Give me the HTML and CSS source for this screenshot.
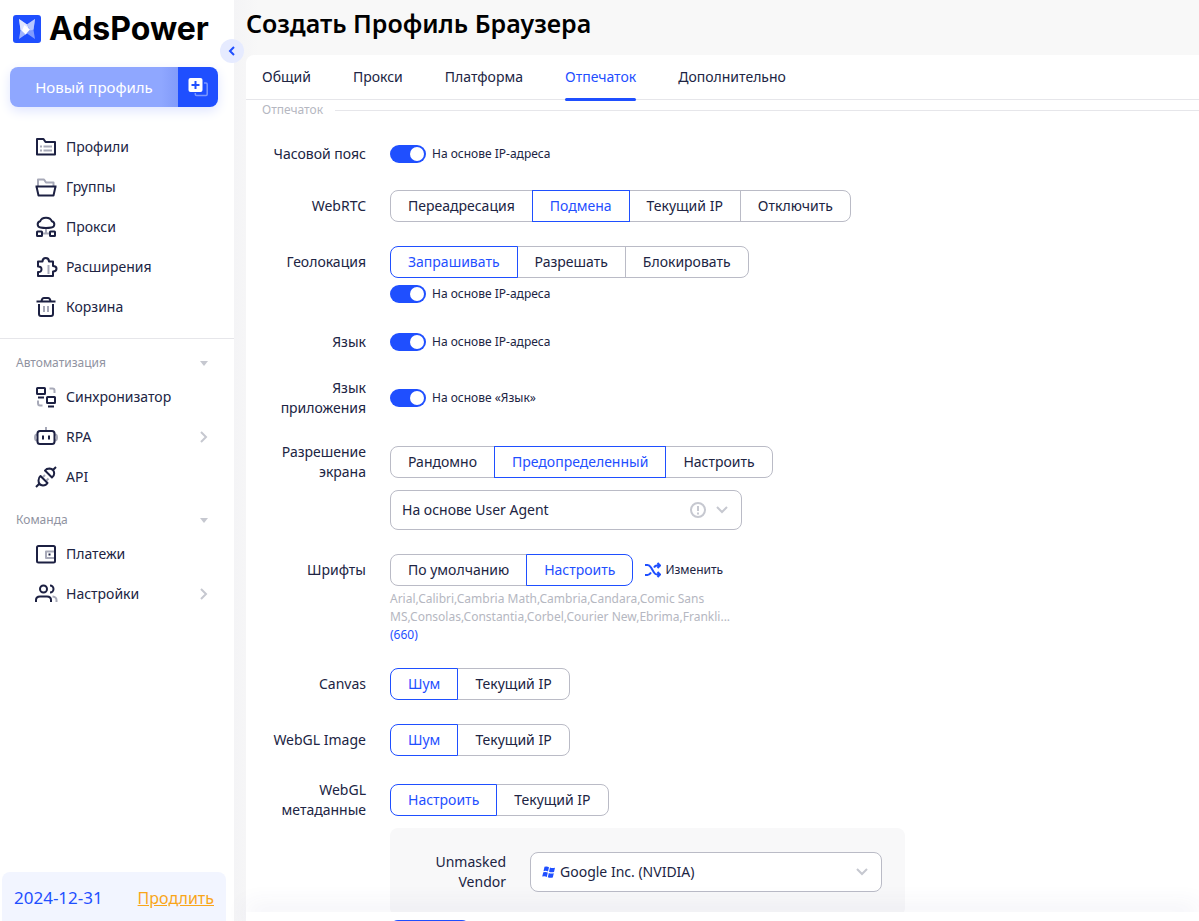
FILE: index.html
```html
<!DOCTYPE html>
<html lang="ru">
<head>
<meta charset="utf-8">
<meta name="viewport" content="width=device-width, initial-scale=1">
<title>AdsPower</title>
<link rel="stylesheet" href="styles.css">
</head>
<body>
<div class="app">
  <aside class="sidebar">
    <button class="collapse" type="button" aria-label="Свернуть меню">
      <svg width="8" height="10" viewBox="0 0 8 10"><path d="M6 1L2 5l4 4"/></svg>
    </button>
    <div class="brand">
      <svg class="brand-mark" width="28" height="28" viewBox="0 0 28 28">
        <rect width="28" height="28" rx="3" fill="#1f4fff"/>
        <path d="M6 4l8 5.500v9L6 24l1.500-9z" fill="#9fb4ff"/>
        <path d="M22 4l-8 5.500v9l8 5.500-1.500-9z" fill="#7f9bff"/>
        <path d="M6 4l8 5.500 1.500 3-5 5-3-3z" fill="#dfe6ff"/>
        <path d="M22 4l-1.500 10.500-3 1-3.500-6z" fill="#b7c7ff"/>
        <path d="M11.500 10l5.500 4.500-4.500 5-3.500-4z" fill="#fff"/>
      </svg>
      <span class="brand-name">AdsPower</span>
    </div>
    <div class="create">
      <button class="create-main" type="button">Новый профиль</button>
      <button class="create-batch" type="button" aria-label="Создать несколько">
        <svg width="20" height="20" viewBox="0 0 20 20">
          <path d="M16 6h2q1.200 0 1.200 1.200v10q0 1.200-1.200 1.200H8.500q-1.200 0-1.200-1.200V16" fill="none" stroke="#7b98ff" stroke-width="1.500"/>
          <rect x="0.500" y="1" width="14" height="14" rx="2" fill="#fff"/>
          <path d="M7.500 4v8M3.500 8h8" stroke="#1f4fff" stroke-width="2"/>
        </svg>
      </button>
    </div>
    <nav class="nav">
      <a class="nav-item" href="#">
        <svg class="icon" viewBox="0 0 24 24"><path d="M3 4h6.500l2 3H21v12.500H3z"/><path class="soft" d="M6 11.500h2M9.500 11.500H18M6 15.500h2M9.500 15.500H18"/></svg>
        <span>Профили</span>
      </a>
      <a class="nav-item" href="#">
        <svg class="icon" viewBox="0 0 24 24"><path class="soft" d="M4 11V4.500h6l2 3h7.500V11"/><path d="M1.500 11.500h21M2.500 11.500l2 9h15l2-9"/></svg>
        <span>Группы</span>
      </a>
      <a class="nav-item" href="#">
        <svg class="icon" viewBox="0 0 24 24"><path class="soft" d="M12 13v5M9 18.500h6"/><path d="M6.500 12.500a3.200 3.200 0 0 1-.3-6.300 6 4.800 0 0 1 11.600 0 3.200 3.200 0 0 1-.3 6.300q-5.500 1-11 0z"/><rect x="3" y="16.500" width="5" height="4.500" rx=".5"/><rect x="16" y="16.500" width="5" height="4.500" rx=".5"/></svg>
        <span>Прокси</span>
      </a>
      <a class="nav-item" href="#">
        <svg class="icon" viewBox="0 0 24 24"><path class="soft" d="M14.500 10v9"/><path d="M4 6.500h4.500q0-3.500 3.200-3.500T15 6.500h4v4.500q3.500 0 3.500 2.700T19 16.500V21H4v-4q3.500.3 3.500-2.700T4 11.500z"/></svg>
        <span>Расширения</span>
      </a>
      <a class="nav-item" href="#">
        <svg class="icon" viewBox="0 0 24 24"><path class="soft" d="M10 11v6M14 11v6"/><path d="M2.500 6.500h19M7.500 6q.5-3 2.500-3h4q2 0 2.500 3M5 9v10q0 2 2 2h10q2 0 2-2V9"/></svg>
        <span>Корзина</span>
      </a>
    </nav>
    <hr class="nav-rule">
    <button class="section" type="button"><span>Автоматизация</span><svg width="8" height="5" viewBox="0 0 8 5"><path d="M0 0h8L4 5z"/></svg></button>
    <nav class="nav">
      <a class="nav-item" href="#">
        <svg class="icon" viewBox="0 0 24 24"><path class="soft" d="M15.500 3.500h3q2 0 2 2V8M4 15.500V18q0 2.500 2 2.500h2.500"/><rect x="3" y="3" width="8" height="6" rx=".5"/><rect x="13" y="12" width="8" height="6" rx=".5"/><path d="M4 12.500h6M14 21.500h6"/></svg>
        <span>Синхронизатор</span>
      </a>
      <a class="nav-item" href="#">
        <svg class="icon" viewBox="0 0 24 24"><path class="soft" d="M12 2v3M3 9.500q-2 0-2 3t2 3M21 9.500q2 0 2 3t-2 3"/><rect x="3.500" y="6" width="17" height="13" rx="2.500"/><path d="M9 10.500v4M15 10.500v4"/></svg>
        <span>RPA</span>
        <svg class="more" width="8" height="12" viewBox="0 0 8 12"><path d="M1 1l5 5-5 5"/></svg>
      </a>
      <a class="nav-item" href="#">
        <svg class="icon" viewBox="0 0 24 24"><path class="soft" d="M9 12l2-2M12.500 15.500l2-2"/><path d="M2 22l3-3M6.500 11l7 7q-1.500 2.500-4.500 2.500-4.500-.5-4.500-5 0-3 2-4.500zM22 2l-3 3M11 5.500l7 7q2.200-1.500 2.200-4.300-.2-4.200-4.700-4.700-3 0-4.500 2z"/></svg>
        <span>API</span>
      </a>
    </nav>
    <button class="section" type="button"><span>Команда</span><svg width="8" height="5" viewBox="0 0 8 5"><path d="M0 0h8L4 5z"/></svg></button>
    <nav class="nav">
      <a class="nav-item" href="#">
        <svg class="icon" viewBox="0 0 24 24"><path class="soft" d="M20 9.500h-8v6.500h8"/><rect x="3" y="4" width="18" height="16.500" rx="1.500"/><path d="M14.500 12.500h2"/></svg>
        <span>Платежи</span>
      </a>
      <a class="nav-item" href="#">
        <svg class="icon" viewBox="0 0 24 24"><path class="soft" d="M18.500 14.500q4 .5 4 3.500v2"/><circle cx="9.500" cy="7" r="3.500"/><path d="M16 3.500a3.500 3.500 0 0 1 0 7M2 20v-2q0-3.500 4-3.500h7q4 0 4 3.500v2"/></svg>
        <span>Настройки</span>
        <svg class="more" width="8" height="12" viewBox="0 0 8 12"><path d="M1 1l5 5-5 5"/></svg>
      </a>
    </nav>
    <div class="plan"><span class="plan-date">2024-12-31</span><a href="#">Продлить</a></div>
  </aside>

  <main class="main">
    <h1 class="title">Создать Профиль Браузера</h1>
    <div class="card">
      <nav class="tabs">
        <a class="tab" href="#">Общий</a>
        <a class="tab" href="#">Прокси</a>
        <a class="tab" href="#">Платформа</a>
        <a class="tab tab-active" href="#" aria-current="page">Отпечаток</a>
        <a class="tab" href="#">Дополнительно</a>
      </nav>
      <form class="form">
        <h2 class="group-title">Отпечаток</h2>

        <div class="row">
          <label class="row-label" for="tz">Часовой пояс</label>
          <div class="toggle"><input class="switch" type="checkbox" id="tz" checked><label for="tz">На основе IP-адреса</label></div>
        </div>

        <div class="row">
          <span class="row-label" id="l-rtc">WebRTC</span>
          <div class="segments" role="radiogroup" aria-labelledby="l-rtc">
            <label class="segment"><input type="radio" name="rtc">Переадресация</label>
            <label class="segment"><input type="radio" name="rtc" checked>Подмена</label>
            <label class="segment"><input type="radio" name="rtc">Текущий IP</label>
            <label class="segment"><input type="radio" name="rtc">Отключить</label>
          </div>
        </div>

        <div class="row">
          <span class="row-label" id="l-geo">Геолокация</span>
          <div class="segments" role="radiogroup" aria-labelledby="l-geo">
            <label class="segment"><input type="radio" name="geo" checked>Запрашивать</label>
            <label class="segment"><input type="radio" name="geo">Разрешать</label>
            <label class="segment"><input type="radio" name="geo">Блокировать</label>
          </div>
          <div class="toggle row-extra-tight"><input class="switch" type="checkbox" id="geo-ip" checked><label for="geo-ip">На основе IP-адреса</label></div>
        </div>

        <div class="row">
          <label class="row-label" for="lang">Язык</label>
          <div class="toggle"><input class="switch" type="checkbox" id="lang" checked><label for="lang">На основе IP-адреса</label></div>
        </div>

        <div class="row">
          <label class="row-label" for="app-lang">Язык приложения</label>
          <div class="toggle"><input class="switch" type="checkbox" id="app-lang" checked><label for="app-lang">На основе «Язык»</label></div>
        </div>

        <div class="row">
          <span class="row-label" id="l-res">Разрешение экрана</span>
          <div class="segments" role="radiogroup" aria-labelledby="l-res">
            <label class="segment"><input type="radio" name="res">Рандомно</label>
            <label class="segment"><input type="radio" name="res" checked>Предопределенный</label>
            <label class="segment"><input type="radio" name="res">Настроить</label>
          </div>
          <div class="field row-extra">
            <select class="select" aria-labelledby="l-res"><option>На основе User Agent</option></select>
            <svg class="info" width="16" height="16" viewBox="0 0 16 16"><circle cx="8" cy="8" r="7"/><path d="M8 4v5M8 10.500v2"/></svg>
            <svg class="chevron" width="12" height="8" viewBox="0 0 12 8"><path d="M1 1l5 5 5-5"/></svg>
          </div>
        </div>

        <div class="row">
          <span class="row-label" id="l-font">Шрифты</span>
          <div class="inline">
            <div class="segments" role="radiogroup" aria-labelledby="l-font">
              <label class="segment"><input type="radio" name="font">По умолчанию</label>
              <label class="segment"><input type="radio" name="font" checked>Настроить</label>
            </div>
            <button class="shuffle" type="button">
              <svg width="16" height="16" viewBox="0 0 16 16"><path d="M0 3h2.500q2 0 3.500 2.500l3 5q1.200 2 3 2H15M0 13h2.500q2 0 3.500-2.500M9 5.500q1.200-2 3-2H15M12.500 1l2.500 2.500L12.500 6M12.500 10l2.500 2.500-2.500 2.500"/></svg>
              Изменить
            </button>
          </div>
          <div class="fonts row-extra-tight">
            <p class="fonts-list">Arial,Calibri,Cambria Math,Cambria,Candara,Comic Sans MS,Consolas,Constantia,Corbel,Courier New,Ebrima,Frankli...</p>
            <a class="fonts-count" href="#">(660)</a>
          </div>
        </div>

        <div class="row">
          <span class="row-label" id="l-canvas">Canvas</span>
          <div class="segments" role="radiogroup" aria-labelledby="l-canvas">
            <label class="segment"><input type="radio" name="canvas" checked>Шум</label>
            <label class="segment"><input type="radio" name="canvas">Текущий IP</label>
          </div>
        </div>

        <div class="row">
          <span class="row-label" id="l-webgl">WebGL Image</span>
          <div class="segments" role="radiogroup" aria-labelledby="l-webgl">
            <label class="segment"><input type="radio" name="webgl" checked>Шум</label>
            <label class="segment"><input type="radio" name="webgl">Текущий IP</label>
          </div>
        </div>

        <div class="row">
          <span class="row-label" id="l-meta">WebGL метаданные</span>
          <div class="segments" role="radiogroup" aria-labelledby="l-meta">
            <label class="segment"><input type="radio" name="meta" checked>Настроить</label>
            <label class="segment"><input type="radio" name="meta">Текущий IP</label>
          </div>
          <div class="panel row-extra">
            <label class="panel-label" for="vendor">Unmasked Vendor</label>
            <div class="field">
              <svg class="windows" width="14" height="12" viewBox="0 0 14 12"><path d="M2.500.8Q5 0 7 1.200L6 5.500Q4 4.300 1.500 5.200zM8 1.500q2.200 1 5 .2l-1 4.300q-2.600.8-5-.3zM1.300 6.200q2.500-.8 4.500.4L4.800 11Q2.800 9.800.2 10.600zM6.800 7q2.200 1 5 .2l-1 4.200q-2.600.8-5-.2z"/></svg>
              <select class="select" id="vendor"><option>Google Inc. (NVIDIA)</option></select>
              <svg class="chevron" width="12" height="8" viewBox="0 0 12 8"><path d="M1 1l5 5 5-5"/></svg>
            </div>
          </div>
        </div>
      </form>
    </div>
    <footer class="footer"><button class="submit" type="button" aria-label="OK"></button></footer>
  </main>
</div>
</body>
</html>
```
FILE: styles.css
```css
* {
  box-sizing: border-box;
}

body {
  margin: 0;
  color: #202443;
  font: 14px/20px "Noto Sans", "Open Sans", sans-serif;
}

a {
  color: inherit;
  text-decoration: none;
}

button {
  padding: 0;
  border: 0;
  background: none;
  color: inherit;
  font: inherit;
  cursor: pointer;
}

svg {
  display: block;
  flex: none;
}

.app {
  display: flex;
  height: 100vh;
  overflow: hidden;
  background: #f6f7f9;
}

/* Sidebar */

.sidebar {
  position: relative;
  display: flex;
  flex: none;
  flex-direction: column;
  width: 234px;
  background: #fff;
}

.collapse {
  position: absolute;
  top: 39px;
  right: -10px;
  display: flex;
  align-items: center;
  justify-content: center;
  width: 24px;
  height: 24px;
  border-radius: 50%;
  background: #e6ebff;
}

.collapse path {
  fill: none;
  stroke: #1f4fff;
  stroke-width: 2;
}

.brand {
  display: flex;
  align-items: center;
  gap: 8px;
  height: 56px;
  padding: 2px 12px 0 13px;
}

.brand-name {
  color: #000;
  font: 700 32px/36px Inter, sans-serif;
}

.create {
  display: flex;
  height: 40px;
  margin: 11px 16px 20px 10px;
  overflow: hidden;
  border-radius: 8px;
  box-shadow: 0 4px 12px #dfe5ff;
}

.create-main {
  flex: 1;
  background: linear-gradient(90deg, #8fa7ff 90%, #829bfa);
  color: #fff;
  font-size: 15px;
}

.create-batch {
  display: flex;
  align-items: center;
  justify-content: center;
  width: 40px;
  background: #1f4fff;
}

.nav {
  display: flex;
  flex-direction: column;
}

.nav-item {
  display: flex;
  align-items: center;
  gap: 8px;
  height: 40px;
  padding: 0 26px 0 34px;
}

.icon {
  width: 24px;
  height: 24px;
  fill: none;
  stroke: #1c2042;
  stroke-width: 2;
  stroke-linejoin: round;
}

.icon .soft {
  stroke: #a7a9b8;
}

.more {
  margin-left: auto;
  fill: none;
  stroke: #c6c8d0;
  stroke-width: 2;
}

.nav-rule {
  width: 100%;
  margin: 11px 0 1px;
  border: 0;
  border-top: 1px solid #e6e6ea;
}

.section {
  display: flex;
  align-items: center;
  justify-content: space-between;
  padding: 14px 26px 5px 16px;
  color: #9093a1;
  font-size: 12px;
  line-height: 18px;
}

.section path {
  fill: #c6c8d0;
}

.plan {
  display: flex;
  align-items: center;
  justify-content: space-between;
  height: 49px;
  margin: auto 8px 0 2px;
  padding: 2px 12px 0;
  border-radius: 8px 8px 0 0;
  background: #f2f5ff;
  color: #1f4fff;
  font-size: 16px;
}

.plan-date {
  font-size: 17px;
}

.plan a {
  color: #f9a51a;
  text-decoration: underline;
}

/* Main column */

.main {
  display: flex;
  flex: 1;
  flex-direction: column;
  min-width: 0;
  padding-left: 12px;
  background: linear-gradient(90deg, #f4f4f6, #f8f8f8 24px);
}

.title {
  margin: 0;
  padding: 7px 0 16px;
  color: #000;
  font-size: 25px;
  font-weight: 600;
  line-height: 32px;
}

.card {
  display: flex;
  flex: 1;
  flex-direction: column;
  min-height: 0;
  border-radius: 8px 0 0;
  background: #fff;
}

.tabs {
  display: flex;
  flex: none;
  gap: 42px;
  padding: 0 16px;
  border-bottom: 1px solid #e6e6ea;
}

.tab {
  position: relative;
  padding: 12px 0;
}

.tab-active {
  color: #1f4fff;
}

.tab-active::after {
  content: "";
  position: absolute;
  right: 0;
  bottom: -2px;
  left: 0;
  height: 3px;
  border-radius: 2px;
  background: #1f4fff;
}

.form {
  display: flex;
  flex: 1;
  flex-direction: column;
  gap: 24px;
  min-height: 0;
  overflow: hidden;
  padding-left: 16px;
}

.group-title {
  display: flex;
  align-items: center;
  gap: 12px;
  margin: 0 0 -2px;
  color: #b5b7c1;
  font-size: 12px;
  font-weight: 400;
  line-height: 20px;
}

.group-title::after {
  content: "";
  flex: 1;
  height: 1px;
  background: #e6e6ea;
}

.row {
  display: grid;
  flex: none;
  grid-template-columns: 104px minmax(0, 1fr);
  align-items: center;
  column-gap: 24px;
}

.row-label {
  text-align: right;
}

.row-extra,
.row-extra-tight {
  grid-column: 2;
  margin-top: 8px;
}

.row-extra-tight {
  margin-top: 4px;
}

.inline {
  display: flex;
  gap: 12px;
}

.toggle {
  display: flex;
  align-items: center;
  gap: 6px;
  height: 24px;
  font-size: 12px;
}

.switch {
  display: flex;
  align-items: center;
  justify-content: flex-end;
  width: 36px;
  height: 18px;
  margin: 0;
  padding: 2px;
  border-radius: 9px;
  appearance: none;
  background: #1f4fff;
}

.switch::before {
  content: "";
  width: 14px;
  height: 14px;
  border-radius: 50%;
  background: #fff;
}

.segments {
  display: flex;
}

.segment {
  height: 32px;
  padding: 5px 17px;
  border: 1px solid #babbc6;
  white-space: nowrap;
}

.segment + .segment {
  margin-left: -1px;
}

.segment:first-child {
  border-radius: 8px 0 0 8px;
}

.segment:last-child {
  border-radius: 0 8px 8px 0;
}

.segment:has(:checked) {
  z-index: 1;
  border-color: #1f4fff;
  color: #1f4fff;
}

.segment input {
  position: absolute;
  opacity: 0;
  pointer-events: none;
}

.field {
  display: flex;
  align-items: center;
  width: 352px;
  max-width: 100%;
  height: 40px;
  padding: 0 13px 0 11px;
  border: 1px solid #babbc6;
  border-radius: 8px;
  background: #fff;
}

.select {
  flex: 1;
  min-width: 0;
  padding: 0;
  border: 0;
  appearance: none;
  background: none;
  color: inherit;
  font: inherit;
}

.info,
.chevron {
  fill: none;
  stroke: #c6c8d0;
  stroke-width: 2;
}

.info {
  margin-right: 10px;
}

.windows {
  margin-right: 4px;
  fill: #1f4fff;
}

.shuffle {
  display: flex;
  align-items: center;
  gap: 4px;
  font-size: 12px;
}

.shuffle path {
  fill: none;
  stroke: #1f4fff;
  stroke-width: 2;
}

.fonts {
  width: 352px;
  max-width: 100%;
  color: #b5b7c1;
  font-size: 12px;
  line-height: 18px;
}

.fonts-list {
  margin: 0;
}

.fonts-count {
  display: block;
  color: #1f4fff;
}

.panel {
  display: flex;
  gap: 24px;
  align-items: center;
  width: 515px;
  max-width: 100%;
  padding: 24px 23px 24px 24px;
  border-radius: 8px;
  background: #f8f8f9;
}

.panel-label {
  flex: 1;
  text-align: right;
}

.panel .field {
  flex: none;
}

.footer {
  position: relative;
  flex: none;
  height: 9px;
  padding: 8px 0 0 144px;
  background: #fff;
  box-shadow: 0 -4px 24px rgba(60, 60, 140, 0.12);
}

.submit {
  display: block;
  width: 80px;
  height: 40px;
  border-radius: 8px;
  background: #1f4fff;
}
```
